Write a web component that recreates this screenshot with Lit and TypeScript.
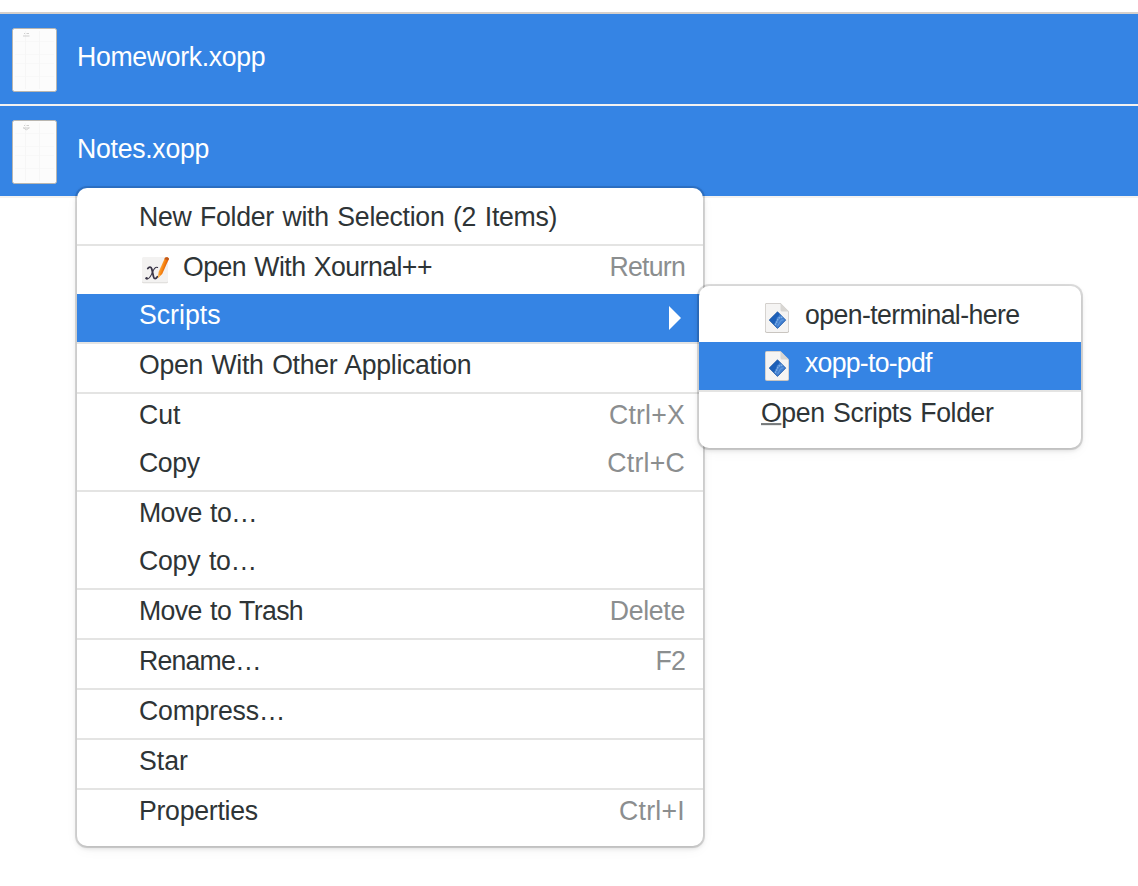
import { LitElement, html, css, svg, nothing } from "lit";
import { customElement, property } from "lit/decorators.js";

const FONT = css`"Liberation Sans", Arial, sans-serif`;

interface Item {
  label: string;
  spacing?: number;
  accel?: string;
  accelSpacing?: number;
  icon?: "journal" | "script";
  active?: boolean;
  submenu?: boolean;
  mnemonic?: boolean;
}

const MAIN: Item[][] = [
  [{ label: "New Folder with Selection (2 Items)", spacing: -0.29 }],
  [
    { label: "Open With Xournal++", spacing: -0.55, accel: "Return", accelSpacing: -0.75, icon: "journal" },
    { label: "Scripts", active: true, submenu: true },
  ],
  [{ label: "Open With Other Application", spacing: -0.32 }],
  [
    { label: "Cut", accel: "Ctrl+X", accelSpacing: 0.2 },
    { label: "Copy", spacing: -0.4, accel: "Ctrl+C", accelSpacing: 0.25 },
  ],
  [
    { label: "Move to…", spacing: -0.6 },
    { label: "Copy to…", spacing: -0.25 },
  ],
  [{ label: "Move to Trash", spacing: -0.6, accel: "Delete", accelSpacing: -0.3 }],
  [{ label: "Rename…", spacing: -0.8, accel: "F2", accelSpacing: -0.8 }],
  [{ label: "Compress…", spacing: -0.2 }],
  [{ label: "Star" }],
  [{ label: "Properties", spacing: -0.27, accel: "Ctrl+I", accelSpacing: 0.25 }],
];

const SCRIPTS: Item[][] = [
  [
    { label: "open-terminal-here", spacing: -0.6, icon: "script" },
    { label: "xopp-to-pdf", spacing: -0.74, icon: "script", active: true },
  ],
  [{ label: "Open Scripts Folder", spacing: -0.4, mnemonic: true }],
];

const journalIcon = html`<svg class="icon journal" width="28" height="28" viewBox="0 0 28 28">
  <defs>
    <linearGradient id="pen" x1="0.2" y1="0.3" x2="0.7" y2="0.6">
      <stop offset="0" stop-color="#ffb455" />
      <stop offset="0.5" stop-color="#f98a14" />
      <stop offset="1" stop-color="#dd5500" />
    </linearGradient>
  </defs>
  <rect x="1" y="2" width="26" height="25.2" rx="1.5" fill="#dddbd8" />
  <rect x="1" y="1" width="26" height="25.2" rx="1.5" fill="#f3f2f1" />
  <g fill="none" stroke="#3a3547" stroke-linecap="round">
    <path d="M6.8 12.6C8.2 10.4 10.2 10.6 10.8 13L12.5 20.6C13 23.2 14.8 23.2 16.4 20.8" stroke-width="1.8" />
    <path d="M16.6 11.4C14.4 10.4 12.6 13.6 11.4 16.4C9.8 20.3 7.6 24 5.2 22.6" stroke-width="1.1" />
  </g>
  <circle cx="5.6" cy="22.2" r="1.2" fill="#3a3547" />
  <path d="M16.9 22L17.6 15.9L24 1.8Q26.5 .5 28 2.8L21.2 18Z" fill="url(#pen)" />
  <path d="M16.9 22L17.3 18.4L19.4 19.6Z" fill="#f8b95e" />
  <path d="M24 1.8Q26.5 .5 28 2.8L27.4 4.2L23.4 3.2Z" fill="#c2591c" />
</svg>`;

const scriptIcon = html`<svg class="icon script" width="24" height="30" viewBox="0 0 24 30">
  <path d="M1.5 0H15.5L24 8.5V28.2Q24 30 22.2 30H1.8Q0 30 0 28.2V1.5Q0 0 1.5 0Z" fill="#c9c5c0" />
  <path d="M2 .7H15.3L23.3 8.8V27.4Q23.3 29 22 29H2Q.7 29 .7 27.4V2Q.7 .7 2 .7Z" fill="#f5f4f3" />
  <path d="M15.5 .3L23.7 8.5H17Q15.5 8.5 15.5 7Z" fill="#d8d6d3" />
  <path d="M12.5 8.8L20.7 17.1L12.5 25.4L4.2 17.1Z" fill="#1c5fb8" stroke="#1a55a5" stroke-width=".8" stroke-linejoin="round" />
  <path d="M14.6 11.2L20.3 17.1L12.5 24.9L9.6 22Q10.6 20.5 10.2 18.6Q12 17 11.8 14.4Q14 13.6 14.6 11.2Z" fill="#437fcf" />
  <path d="M17.4 14.2Q13.8 14.2 12.6 16.8Q11.6 20 9.8 21.8" fill="none" stroke="#7fb0e6" stroke-width="1.6" stroke-dasharray="1.7 .7" />
  <path d="M18.6 16.6Q16 17 15 18.8Q14.2 20.8 12.6 22.8" fill="none" stroke="#5d97dc" stroke-width="1.2" />
</svg>`;

@customElement("context-menu")
class ContextMenu extends LitElement {
  @property({ attribute: false }) groups: Item[][] = [];

  static styles = css`
    :host {
      display: block;
      box-sizing: border-box;
      padding: 8px 0;
      background: #fff;
      border-radius: 10px;
      box-shadow: 0 0 0 2px rgba(0, 0, 0, 0.13), 0 2px 5px rgba(0, 0, 0, 0.15), 0 4px 14px rgba(0, 0, 0, 0.04);
      font: 26.67px ${FONT};
      color: #2e3436;
    }
    .group + .group {
      border-top: 2px solid #e4e4e3;
    }
    .item {
      display: flex;
      align-items: flex-start;
      height: 48px;
      padding: 0 18px 0 62px;
      box-sizing: border-box;
      line-height: 42px;
      white-space: pre;
    }
    .text {
      word-spacing: 1.5px;
      transform: scaleY(1.055);
      transform-origin: 0 30px;
    }
    .active {
      background: #3584e4;
      color: #fff;
    }
    .accel {
      margin-left: auto;
      color: #8b8e8f;
    }
    .icon {
      flex: none;
      display: block;
    }
    .journal {
      margin: 10px 14px 0 2px;
    }
    .script {
      margin: 9px 16px 0 4px;
    }
    .arrow {
      display: block;
      margin: 12px 4px 0 auto;
    }
    .mnemonic {
      text-decoration: underline;
      text-decoration-thickness: 2px;
      text-decoration-color: #777b7c;
      text-underline-offset: 0.5px;
      text-decoration-skip-ink: none;
    }
  `;

  private item(i: Item) {
    return html`<div class="item ${i.active ? "active" : ""}">
      ${i.icon === "journal" ? journalIcon : i.icon === "script" ? scriptIcon : nothing}<span
        class="text"
        style="letter-spacing:${i.spacing ?? 0}px"
        >${i.mnemonic ? html`<span class="mnemonic">${i.label[0]}</span>${i.label.slice(1)}` : i.label}</span
      >${i.accel ? html`<span class="text accel" style="letter-spacing:${i.accelSpacing ?? 0}px">${i.accel}</span>` : nothing}${i.submenu
        ? html`<svg class="arrow" width="12" height="24" viewBox="0 0 12 24"><path d="M0 0L12 12L0 24Z" fill="#fff" /></svg>`
        : nothing}
    </div>`;
  }

  render() {
    return this.groups.map((g) => html`<div class="group">${g.map((i) => this.item(i))}</div>`);
  }
}

@customElement("app-root")
class AppRoot extends LitElement {
  static styles = css`
    :host {
      display: block;
      position: relative;
      width: 1138px;
      height: 886px;
      overflow: hidden;
      background: #fff;
      font: 26.67px ${FONT};
    }
    .list {
      margin-top: 12px;
      border-top: 2px solid #d5d0cc;
    }
    .file {
      display: flex;
      height: 90px;
      padding-left: 12px;
      background: #3584e4;
      color: #fff;
      line-height: 86px;
      border-bottom: 2px solid #f3f2f1;
    }
    .name {
      transform: scaleY(1.055);
      transform-origin: 0 52px;
    }
    .thumb {
      display: block;
      margin: 14px 20px 0 0;
    }
    .main,
    .sub {
      position: absolute;
    }
    .main {
      left: 77px;
      top: 188px;
      width: 626px;
    }
    .sub {
      left: 699px;
      top: 286px;
      width: 382px;
    }
  `;

  private file(name: string, spacing: number, notes: boolean) {
    return html`<div class="file">
      <svg class="thumb" width="45" height="64" viewBox="0 0 45 64">
        <rect x=".5" y=".5" width="44" height="63" rx="2" fill="#fcfcfc" stroke="#b9b6b0" />
        <path d="M3 13.5H42M3 26.5H42M3 35.5H42M3 48.5H42" stroke="#f8f8f8" fill="none" />
        <path d="M13.5 3V61M27.5 3V61" stroke="#f6f6f6" fill="none" />
        <path d="M12 5.5H13M14.5 5.5H17M11 8H17.5" stroke="#cfcfcf" fill="none" />
        ${notes ? svg`<path d="M11.5 7.5Q14.5 12 17 7.5" stroke="#d3d3d3" fill="none" />` : nothing}
      </svg>
      <span class="name" style="letter-spacing:${spacing}px">${name}</span>
    </div>`;
  }

  render() {
    return html`
      <div class="list">${this.file("Homework.xopp", -0.33, false)}${this.file("Notes.xopp", -0.28, true)}</div>
      <context-menu class="main" .groups=${MAIN}></context-menu>
      <context-menu class="sub" .groups=${SCRIPTS}></context-menu>
    `;
  }
}
